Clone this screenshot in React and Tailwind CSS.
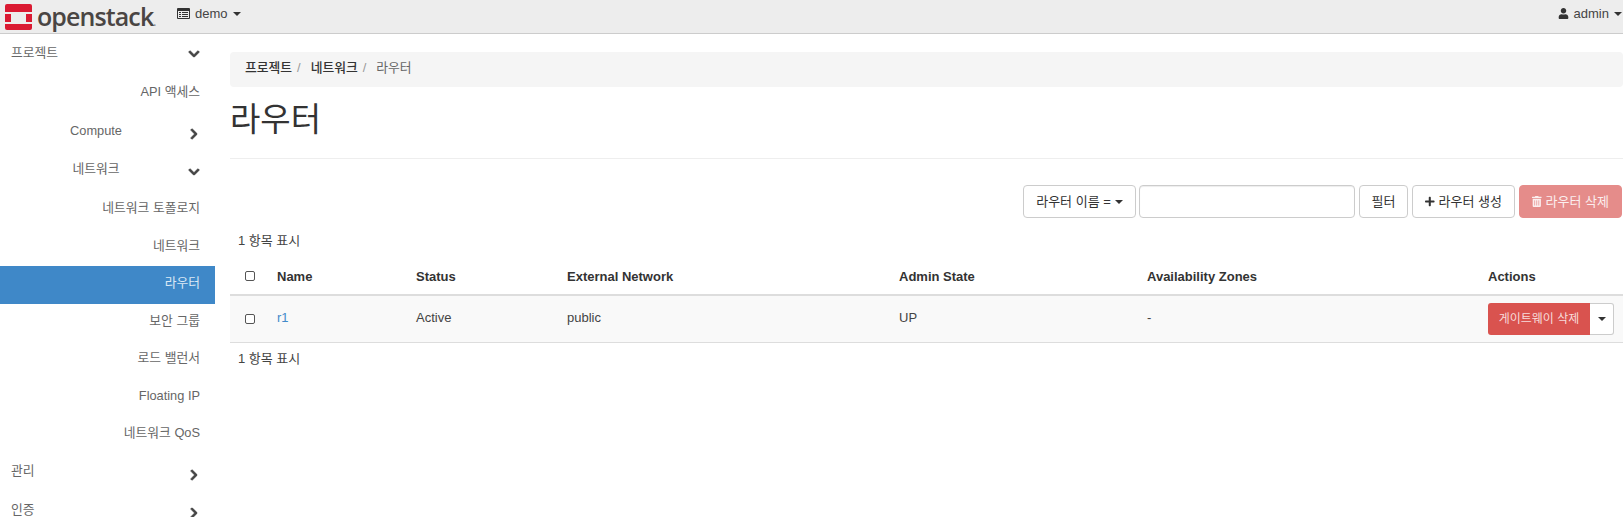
import React from "react";
import { FaChevronDown, FaChevronRight, FaPlus, FaTrashAlt, FaUser } from "react-icons/fa";

const FONT = "font-['Liberation_Sans','Noto_Sans_CJK_KR',sans-serif]";

const Caret = ({ className = "border-t-[#333]" }) => (
  <span className={`inline-block w-0 h-0 border-x-[4px] border-x-transparent border-t-[4px] ${className}`} />
);

const Logo = () => (
  <svg width="27" height="26" viewBox="0 0 27 26" className="shrink-0">
    <path fill="#da1a32" d="M2 0h23a2 2 0 0 1 2 2v6H0V2a2 2 0 0 1 2-2z" />
    <path fill="#da1a32" d="M0 20h27v4a2 2 0 0 1-2 2H2a2 2 0 0 1-2-2z" />
    <rect x="0" y="10" width="6" height="8" fill="#da1a32" />
    <rect x="21" y="10" width="6" height="8" fill="#da1a32" />
  </svg>
);

const ListAlt = () => (
  <svg width="13" height="11" viewBox="0 0 13 11" className="shrink-0 text-[#333]">
    <path fill="currentColor" d="M1 0h11a1 1 0 0 1 1 1v9a1 1 0 0 1-1 1H1a1 1 0 0 1-1-1V1a1 1 0 0 1 1-1zm0 3v7h11V3z" />
    <path fill="currentColor" d="M2 4h2v1H2zM5 4h6v1H5zM2 6h2v1H2zM5 6h6v1H5zM2 8h2v1H2zM5 8h6v1H5z" />
  </svg>
);

// sidebar rows, in order from the top
const NAV = [
  { label: "프로젝트", h: "h-[40px]", pt: "pt-[9px]", kind: "top", open: true },
  { label: "API 액세스", h: "h-[39px]", pt: "pt-[8px]" },
  { label: "Compute", h: "h-[39px]", pt: "pt-[8px]", kind: "group" },
  { label: "네트워크", h: "h-[38px]", pt: "pt-[7px]", kind: "group", open: true },
  { label: "네트워크 토폴로지", h: "h-[38px]", pt: "pt-[8px]" },
  { label: "네트워크", h: "h-[38px]", pt: "pt-[8px]" },
  { label: "라우터", h: "h-[38px]", pt: "pt-[7px]", active: true },
  { label: "보안 그룹", h: "h-[38px]", pt: "pt-[7px]" },
  { label: "로드 밸런서", h: "h-[37px]", pt: "pt-[6px]" },
  { label: "Floating IP", h: "h-[38px]", pt: "pt-[7px]" },
  { label: "네트워크 QoS", h: "h-[38px]", pt: "pt-[6px]" },
  { label: "관리", h: "h-[38px]", pt: "pt-[6px]", kind: "top" },
  { label: "인증", h: "h-[38px]", pt: "pt-[7px]", kind: "top" },
];

const NavRow = ({ item }) => {
  const Chevron = item.open ? FaChevronDown : FaChevronRight;
  const color = item.active ? "bg-[#3f88c8] text-[#dbe9f5]" : "text-[#666]";
  const chevronTop = item.pt === "pt-[6px]" ? "mt-[8px]" : item.pt === "pt-[9px]" ? "mt-[5px]" : "mt-[7px]";
  if (item.kind === "top") {
    return (
      <div className={`${item.h} ${item.pt} ${color} shrink-0 flex justify-between pl-[11px] pr-[15px]`}>
        <span className="leading-5">{item.label}</span>
        <Chevron size={12} stroke="currentColor" strokeWidth={40} className={`text-[#444] ${chevronTop}`} />
      </div>
    );
  }
  if (item.kind === "group") {
    return (
      <div className={`${item.h} ${item.pt} ${color} shrink-0 flex justify-end pr-[15px]`}>
        <span className="w-[80px] text-center leading-5">{item.label}</span>
        <Chevron size={12} stroke="currentColor" strokeWidth={40} className={`text-[#444] ml-[52px] ${chevronTop}`} />
      </div>
    );
  }
  return (
    <div className={`${item.h} ${item.pt} ${color} shrink-0 flex justify-end pr-[15px]`}>
      <span className="leading-5">{item.label}</span>
    </div>
  );
};

const Checkbox = () => (
  <span className="block w-[10px] h-[10px] ml-[2px] border border-[#555] rounded-[2px] bg-white" />
);

const Button = ({ className = "", children }) => (
  <button className={`h-[33px] px-3 text-[13px] rounded-[4px] border flex items-center justify-center whitespace-nowrap ${className}`}>
    {children}
  </button>
);

const COLS = ["w-[39px]", "w-[139px]", "w-[151px]", "w-[332px]", "w-[248px]", "w-[341px]", ""];

const App = () => {
  return (
    <div className={`${FONT} w-[1623px] h-[517px] overflow-hidden flex flex-col bg-white text-[13px] text-[#333]`}>
      {/* Top bar */}
      <header className="h-[34px] shrink-0 bg-[#ededed] border-b border-[#ccc] flex items-center pl-[5px] pr-[1px]">
        <Logo />
        <div className="flex items-baseline ml-[5px] -mt-[2px] w-[116px] text-[#4a4543] font-['Open_Sans',sans-serif]">
          <span className="font-semibold text-[25px] leading-[30px] tracking-[-0.9px]">openstack</span>
          <span className="text-[10px] font-bold text-[#888]">.</span>
        </div>
        <div className="flex items-center ml-[24px] text-[#444] -mt-[6px]">
          <ListAlt />
          <span className="ml-[5px]">demo</span>
          <span className="ml-[5px] flex"><Caret /></span>
        </div>
        <div className="flex items-center ml-auto text-[#444] -mt-[6px]">
          <FaUser size={11} className="text-[#333]" />
          <span className="ml-[5px]">admin</span>
          <span className="ml-[5px] flex"><Caret /></span>
        </div>
      </header>

      <div className="flex flex-1 min-h-0">
        {/* Sidebar */}
        <nav className="w-[215px] shrink-0 flex flex-col overflow-hidden text-[12.8px]">
          {NAV.map((item, i) => (
            <NavRow key={i} item={item} />
          ))}
        </nav>

        {/* Main */}
        <main className="flex-1 min-w-0 pl-[15px]">
          <div className="mt-[18px] h-[35px] bg-[#f5f5f5] rounded-[4px] flex items-center pl-[15px] pb-[3px] text-[12.8px] text-[#666]">
            <span className="font-medium text-[#333]">프로젝트</span>
            <span className="text-[#999] ml-[5px] mr-[10px]">/</span>
            <span className="font-medium text-[#333]">네트워크</span>
            <span className="text-[#999] ml-[5px] mr-[10px]">/</span>
            <span>라우터</span>
          </div>

          <h1 className="mt-[11px] text-[33px] leading-[44px] text-[#333]">라우터</h1>
          <div className="mt-[16px] border-t border-[#eee]" />

          <div className="mt-[26px] flex justify-end pr-[1px]">
            <Button className="w-[113px] border-[#ccc] text-[#333] bg-white">
              라우터 이름 =<span className="ml-1 flex"><Caret /></span>
            </Button>
            <input className="ml-[3px] w-[216px] h-[33px] border border-[#ccc] rounded-[4px] shadow-[inset_0_1px_1px_rgba(0,0,0,0.075)]" />
            <Button className="ml-[4px] w-[49px] border-[#ccc] text-[#333] bg-white">필터</Button>
            <Button className="ml-[4px] w-[103px] border-[#ccc] text-[#333] bg-white">
              <FaPlus size={11} className="mr-[4px]" />라우터 생성
            </Button>
            <Button className="ml-[4px] w-[103px] border-[#e58c8a] text-[#fbeeee] bg-[#e58c8a]">
              <FaTrashAlt size={11} className="mr-[4px]" />라우터 삭제
            </Button>
          </div>

          <div className="mt-[13px] h-[20px] pl-[8px] leading-5 text-[#444]">1 항목 표시</div>

          <table className="mt-[7px] w-full table-fixed border-collapse">
            <colgroup>
              {COLS.map((c, i) => (
                <col key={i} className={c} />
              ))}
            </colgroup>
            <thead>
              <tr className="h-[37px] border-b-2 border-[#ddd] font-bold text-left">
                <th className="pl-[13px]"><Checkbox /></th>
                <th className="pl-[8px] pt-[1px]">Name</th>
                <th className="pl-[8px] pt-[1px]">Status</th>
                <th className="pl-[8px] pt-[1px]">External Network</th>
                <th className="pl-[8px] pt-[1px]">Admin State</th>
                <th className="pl-[8px] pt-[1px]">Availability Zones</th>
                <th className="pl-[8px] pt-[1px]">Actions</th>
              </tr>
            </thead>
            <tbody>
              <tr className="h-[47px] bg-[#f9f9f9] border-b border-[#ddd] text-[#444]">
                <td className="pl-[13px]"><Checkbox /></td>
                <td className="pl-[8px] pb-[2px] text-[#428bca]">r1</td>
                <td className="pl-[8px] pb-[2px]">Active</td>
                <td className="pl-[8px] pb-[2px]">public</td>
                <td className="pl-[8px] pb-[2px]">UP</td>
                <td className="pl-[8px] pb-[2px]">-</td>
                <td className="pl-[8px]">
                  <div className="flex">
                    <button className="w-[102px] h-[32px] text-[12px] text-[#f7dcdb] bg-[#d9534f] rounded-l-[3px] whitespace-nowrap">
                      게이트웨이 삭제
                    </button>
                    <button className="w-[24px] h-[32px] bg-white border border-l-0 border-[#ccc] rounded-r-[3px] flex items-center justify-center">
                      <Caret />
                    </button>
                  </div>
                </td>
              </tr>
            </tbody>
          </table>

          <div className="mt-[6px] pl-[8px] leading-5 text-[#444]">1 항목 표시</div>
        </main>
      </div>
    </div>
  );
};

export default App;
